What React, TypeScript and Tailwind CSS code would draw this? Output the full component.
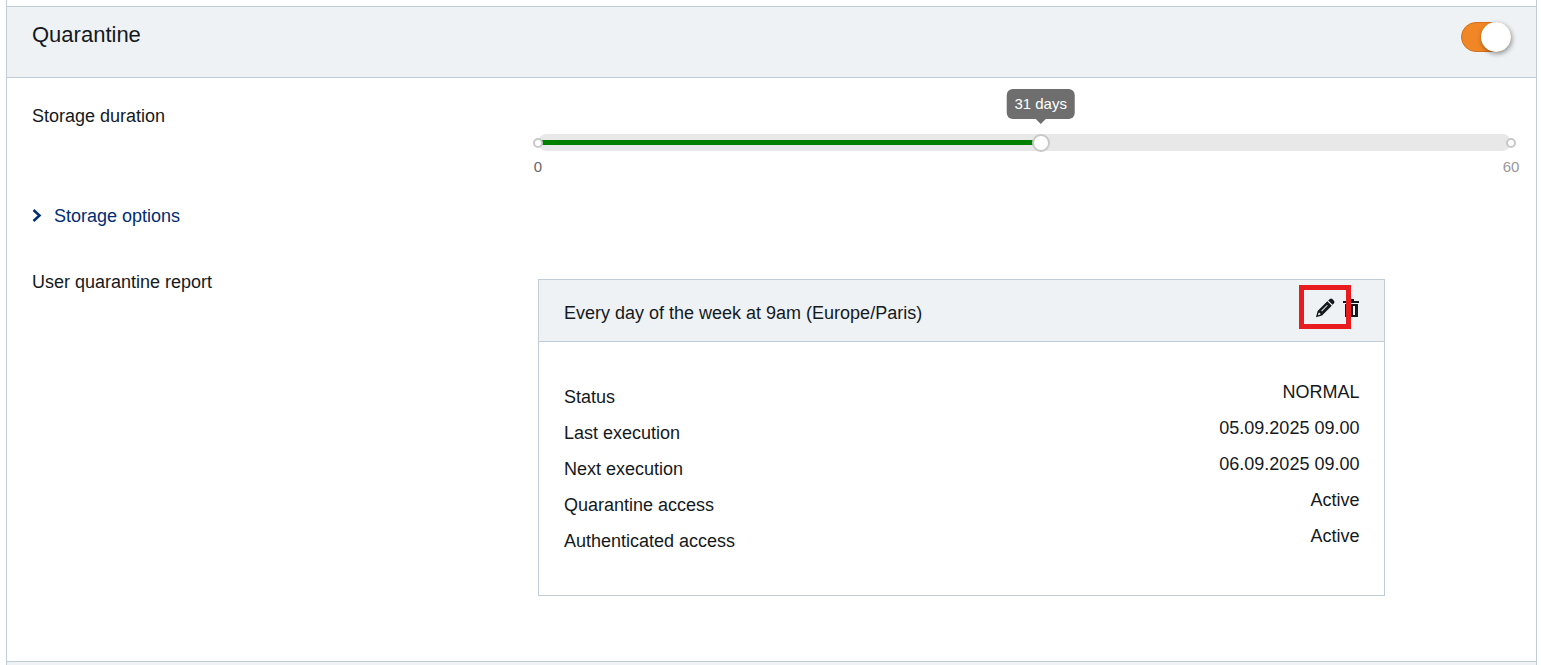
import React, { useState } from 'react';

const MAX_DAYS = 60;

const REPORT_ROWS = [
  { label: 'Status', value: 'NORMAL' },
  { label: 'Last execution', value: '05.09.2025 09.00' },
  { label: 'Next execution', value: '06.09.2025 09.00' },
  { label: 'Quarantine access', value: 'Active' },
  { label: 'Authenticated access', value: 'Active' },
];

const PencilIcon = () => (
  <svg viewBox="0 0 20 20" className="size-5" fill="currentColor" aria-hidden="true">
    <path d="M13.2 2.4 14.6 1.2a2.2 2.2 0 0 1 3 .1l1.1 1.1a2.2 2.2 0 0 1 .1 3L17.6 6.8z" />
    <path
      fillRule="evenodd"
      d="M12.3 3.2 16.8 7.7 7 17.6 1 19.2l1.6-6.2zM12 6.9 6.2 12.7l.7.7L12.7 7.6zM3.6 14.8l-.6 2.4 2.4-.6-.2-1.5z"
    />
  </svg>
);

const TrashIcon = () => (
  <svg viewBox="0 0 16 20" className="h-5 w-4" fill="currentColor" aria-hidden="true">
    <path d="M5 1h6v2h5v2H0V3h5z" />
    <path fillRule="evenodd" d="M2 6h13v13H2zM5 8v9h2V8zM10 8v9h2V8z" />
  </svg>
);

const Toggle: React.FC<{ checked: boolean; onChange: (v: boolean) => void; label: string }> = ({ checked, onChange, label }) => (
  <label className="relative block w-[50px] h-[30px] cursor-pointer">
    <input
      type="checkbox"
      role="switch"
      aria-label={label}
      checked={checked}
      onChange={(e) => onChange(e.target.checked)}
      className="peer absolute inset-0 w-full h-full opacity-0"
    />
    <span className="block h-full rounded-full border border-gray-400 bg-gray-300 peer-checked:border-[#d6701a] peer-checked:bg-[#f08626]" />
    <span className="absolute top-0 left-0 size-[30px] rounded-full bg-white shadow-[1px_2px_5px_rgba(0,0,0,0.4)] peer-checked:left-5" />
  </label>
);

const DurationSlider: React.FC = () => {
  const [days, setDays] = useState(31);
  const percent = `${(days / MAX_DAYS) * 100}%`;

  return (
    <div className="pt-8 text-[15px] leading-5">
      <div className="relative h-[17px] rounded-full bg-[#e8e8e8] flex items-center">
        <div className="h-[5px] bg-[#008000]" style={{ width: percent }} />
        <span className="absolute -left-[5px] top-1 size-2.5 rounded-full border-2 border-[#c8c8c8] bg-white" />
        <span className="absolute -right-[5px] top-1 size-2.5 rounded-full border-2 border-[#c8c8c8] bg-white" />
        <span
          className="absolute top-1/2 size-[18px] -translate-1/2 rounded-full border-2 border-[#c8c8c8] bg-white"
          style={{ left: percent }}
        />
        <output
          htmlFor="duration"
          className="absolute bottom-8 -translate-x-1/2 rounded-md bg-[#6e6e6e] px-2 py-[5px] text-white whitespace-nowrap"
          style={{ left: percent }}
        >
          {days} days
          <span className="absolute top-full left-1/2 -translate-x-1/2 border-x-[5px] border-t-[5px] border-x-transparent border-t-[#6e6e6e]" />
        </output>
        <input
          id="duration"
          type="range"
          min={0}
          max={MAX_DAYS}
          value={days}
          onChange={(e) => setDays(Number(e.target.value))}
          className="absolute inset-0 w-full cursor-pointer opacity-0"
        />
      </div>
      <div className="-mx-2.5 mt-1.5 flex justify-between">
        <span className="w-5 text-center text-[#666]">0</span>
        <span className="w-5 text-center text-[#999]">{MAX_DAYS}</span>
      </div>
    </div>
  );
};

const ReportCard: React.FC = () => (
  <article className="w-[87.1%] border border-[#c0cdd4]">
    <header className="relative flex justify-between border-b border-[#c0cdd4] bg-[#eef2f5] px-[25px] pt-[18px] pb-[15px]">
      <h3 className="pt-0.5 leading-[26px]">Every day of the week at 9am (Europe/Paris)</h3>
      <div className="flex items-start gap-2">
        <button type="button" aria-label="Edit report" className="cursor-pointer">
          <PencilIcon />
        </button>
        <button type="button" aria-label="Delete report" className="cursor-pointer">
          <TrashIcon />
        </button>
      </div>
      {/* Highlight around the edit action */}
      <span className="pointer-events-none absolute top-[5px] right-[33px] h-11 w-[52px] border-5 border-[#e81c1f]" />
    </header>
    <dl className="px-[25px] pt-8 pb-[41px]">
      {REPORT_ROWS.map((row) => (
        <div key={row.label} className="flex items-start justify-between leading-[26px]">
          <dt className="pt-2.5">{row.label}</dt>
          <dd className="pt-[5px]">{row.value}</dd>
        </div>
      ))}
    </dl>
  </article>
);

const App: React.FC = () => {
  const [enabled, setEnabled] = useState(true);

  return (
    <main className="ml-1.5 mr-1 min-h-screen border-x border-[#c0cdd4] bg-white pt-1.5 font-['Liberation_Sans',Arial,sans-serif] text-lg text-[#14191d]">
      <section>
        <header className="flex justify-between border-y border-[#c0cdd4] bg-[#eef2f5] px-[25px] pt-[15px] pb-[25px]">
          <h2 className="text-[22px] leading-[26px]">Quarantine</h2>
          <Toggle checked={enabled} onChange={setEnabled} label="Quarantine" />
        </header>

        <div className="px-[25px] pt-6 pb-[65px]">
          <div className="grid grid-cols-[13fr_25fr]">
            <label htmlFor="duration" className="pt-px leading-[26px]">Storage duration</label>
            <DurationSlider />
          </div>

          <button type="button" className="mt-[26px] flex items-center gap-3 leading-[26px] text-[#002d74] cursor-pointer">
            <svg viewBox="0 0 10 14" className="h-3.5 w-2.5" fill="none" stroke="currentColor" strokeWidth="2.5">
              <path d="M1.5 1 7.5 6.5 1.5 12" />
            </svg>
            Storage options
          </button>

          <div className="mt-10 grid grid-cols-[13fr_25fr]">
            <h3 className="leading-[26px]">User quarantine report</h3>
            <div className="pt-2.5">
              <ReportCard />
            </div>
          </div>
        </div>
      </section>
      <div className="h-1 border-t border-[#c0cdd4] bg-[#eef2f5]" />
    </main>
  );
};

export default App;
